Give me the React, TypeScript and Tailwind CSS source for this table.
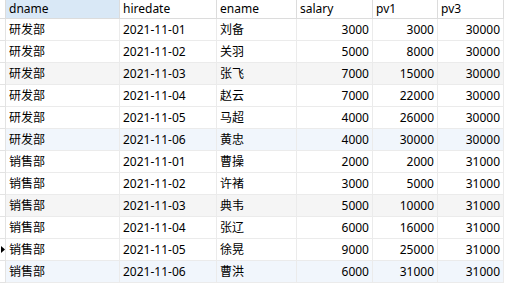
import React from 'react';

const rows = [
  ['研发部', '2021-11-01', '刘备', '3000', '3000', '30000'],
  ['研发部', '2021-11-02', '关羽', '5000', '8000', '30000'],
  ['研发部', '2021-11-03', '张飞', '7000', '15000', '30000'],
  ['研发部', '2021-11-04', '赵云', '7000', '22000', '30000'],
  ['研发部', '2021-11-05', '马超', '4000', '26000', '30000'],
  ['研发部', '2021-11-06', '黄忠', '4000', '30000', '30000'],
  ['销售部', '2021-11-01', '曹操', '2000', '2000', '31000'],
  ['销售部', '2021-11-02', '许褚', '3000', '5000', '31000'],
  ['销售部', '2021-11-03', '典韦', '5000', '10000', '31000'],
  ['销售部', '2021-11-04', '张辽', '6000', '16000', '31000'],
  ['销售部', '2021-11-05', '徐晃', '9000', '25000', '31000'],
  ['销售部', '2021-11-06', '曹洪', '6000', '31000', '31000'],
];

const headers = ['dname', 'hiredate', 'ename', 'salary', 'pv1', 'pv3'];

const rowBg = (i: number) => {
  if (i === 2 || i === 8) return 'bg-[#f5f5f5]';
  if (i === 5 || i === 11) return 'bg-[#f1f6fc]';
  return 'bg-white';
};

const App: React.FC = () => {
  return (
    <div
      className="w-[519px] h-[290px] bg-white text-[12px] text-black overflow-hidden"
      style={{ fontFamily: '"Noto Sans", "Noto Sans CJK SC", sans-serif' }}
    >
      <div className="grid grid-cols-[6px_114px_97px_80px_76px_65px_66px] w-[504px]">
        {/* Header */}
        <div className="h-[19px] border-r border-b border-[#dcdcdc] bg-white" />
        {headers.map((h, i) => (
          <div
            key={h}
            className={`h-[19px] border-r border-b border-[#dcdcdc] pl-[3px] flex items-center leading-none ${
              i === 0 ? 'bg-[#d9e8f6]' : 'bg-white'
            }`}
          >
            {h}
          </div>
        ))}

        {/* Rows */}
        {rows.map((r, i) => (
          <React.Fragment key={i}>
            <div className="h-[22px] border-r border-b border-[#e3e3e3] bg-white flex items-center">
              {i === 10 && (
                <svg width="4" height="7" viewBox="0 0 4 7" className="ml-[1px]">
                  <path d="M0 0 L4 3.5 L0 7 Z" fill="#000" />
                </svg>
              )}
            </div>
            {r.map((c, j) => (
              <div
                key={j}
                className={`h-[22px] border-r border-b border-[#ebebeb] flex items-center leading-none ${rowBg(i)} ${
                  j >= 3 ? 'justify-end pr-[3px]' : 'pl-[3px]'
                }`}
              >
                {c}
              </div>
            ))}
          </React.Fragment>
        ))}
      </div>
    </div>
  );
};

export default App;
